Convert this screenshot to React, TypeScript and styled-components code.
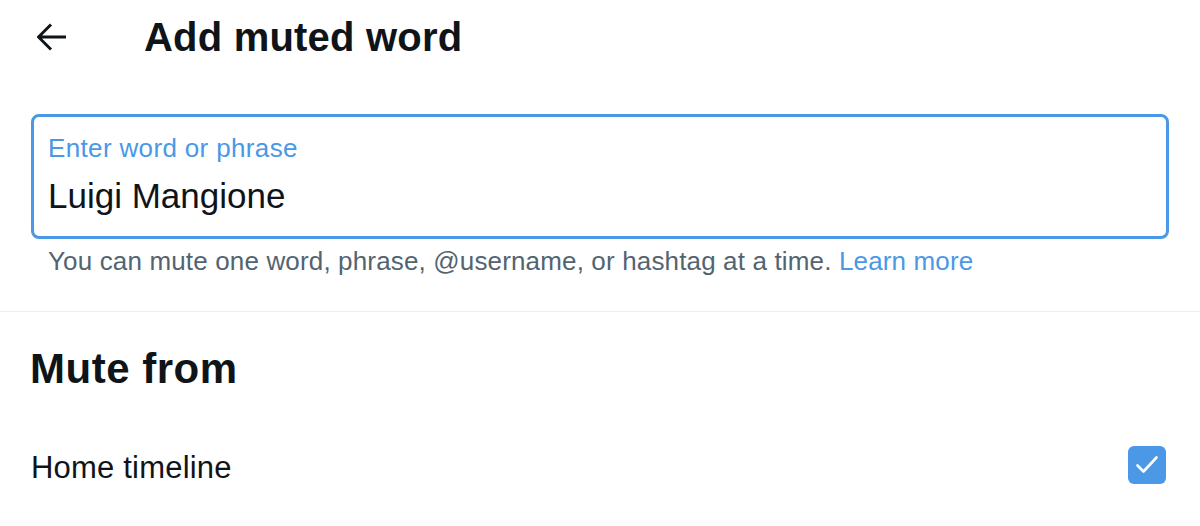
import React from "react";
import styled, { createGlobalStyle } from "styled-components";

const Global = createGlobalStyle`
  html, body { margin: 0; padding: 0; background: #ffffff; }
  body { font-family: "Liberation Sans", Arial, sans-serif; color: #0f1419; }
`;

const Page = styled.div`
  width: 1200px;
  height: 526px;
  overflow: hidden;
  background: #ffffff;
  display: flex;
  flex-direction: column;
`;

const Header = styled.header`
  height: 74px;
  display: flex;
  align-items: center;
  padding-left: 37px;
  gap: 77px;
`;

const BackButton = styled.button`
  width: 30px;
  height: 30px;
  padding: 0;
  border: none;
  background: transparent;
  display: flex;
  align-items: center;
  justify-content: center;
  color: #0f1419;
`;

const Title = styled.h1`
  margin: 0;
  font-size: 40px;
  line-height: 46px;
  font-weight: 700;
  letter-spacing: 0.2px;
`;

const FieldSection = styled.section`
  padding: 40px 31px 0;
`;

const InputBox = styled.div`
  border: 3px solid #4a98e6;
  border-radius: 8px;
  padding: 16px 13px 19px 14px;
  display: flex;
  flex-direction: column;
  gap: 13px;
  height: 125px;
  box-sizing: border-box;
`;

const FieldLabel = styled.label`
  font-size: 26px;
  line-height: 30px;
  letter-spacing: 0.35px;
  color: #4a98e6;
`;

const FieldValue = styled.div`
  font-size: 35px;
  line-height: 40px;
  color: #0f1419;
`;

const Helper = styled.p`
  margin: 7px 0 0 17px;
  font-size: 26px;
  line-height: 30px;
  letter-spacing: 0.15px;
  color: #536471;
`;

const Link = styled.a`
  color: #4a98e6;
  text-decoration: none;
`;

const Divider = styled.hr`
  margin: 35px 0 0;
  border: none;
  height: 1px;
  background: #eceff1;
`;

const SectionTitle = styled.h2`
  margin: 33px 0 0;
  padding-left: 30px;
  font-size: 42px;
  line-height: 48px;
  font-weight: 700;
  letter-spacing: 0.5px;
`;

const OptionRow = styled.div`
  margin-top: 34px;
  height: 76px;
  display: flex;
  align-items: center;
  justify-content: space-between;
  padding: 0 34px 0 31px;
`;

const OptionLabel = styled.span`
  font-size: 31px;
  line-height: 36px;
  letter-spacing: 0.2px;
  margin-top: 6px;
`;

const Checkbox = styled.span<{ $checked: boolean }>`
  width: 38px;
  height: 38px;
  border-radius: 6px;
  background: ${(p) => (p.$checked ? "#4a98e6" : "transparent")};
  display: flex;
  align-items: center;
  justify-content: center;
`;

export default function App() {
  return (
    <Page>
      <Global />
      <Header>
        <BackButton aria-label="Back">
          <svg width="30" height="28" viewBox="0 0 30 28" fill="none">
            <path d="M29 14H2.5M14 1.5L1.5 14L14 26.5" stroke="#0f1419" strokeWidth="3" />
          </svg>
        </BackButton>
        <Title>Add muted word</Title>
      </Header>
      <FieldSection>
        <InputBox>
          <FieldLabel>Enter word or phrase</FieldLabel>
          <FieldValue>Luigi Mangione</FieldValue>
        </InputBox>
        <Helper>
          You can mute one word, phrase, @username, or hashtag at a time.{" "}
          <Link href="#">Learn more</Link>
        </Helper>
      </FieldSection>
      <Divider />
      <SectionTitle>Mute from</SectionTitle>
      <OptionRow>
        <OptionLabel>Home timeline</OptionLabel>
        <Checkbox $checked>
          <svg width="24" height="20" viewBox="0 0 24 20" fill="none">
            <path d="M2.5 10.5L8.5 16.5L21.5 2.5" stroke="#ffffff" strokeWidth="2.6" strokeLinecap="round" strokeLinejoin="round" />
          </svg>
        </Checkbox>
      </OptionRow>
    </Page>
  );
}
